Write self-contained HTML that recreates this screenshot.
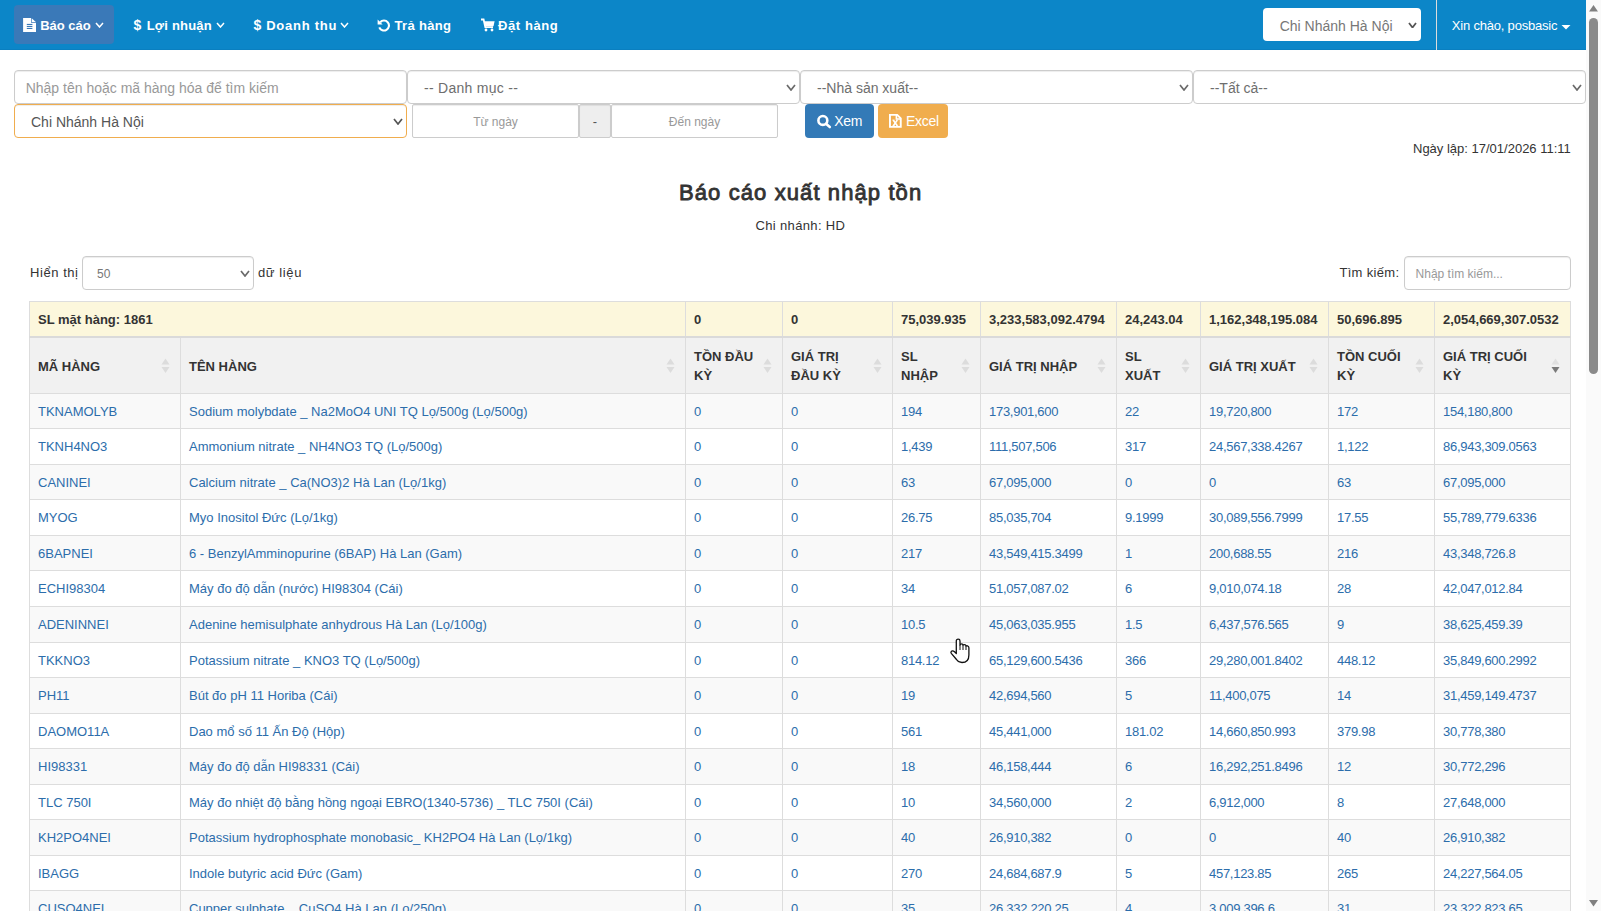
<!DOCTYPE html>
<html><head><meta charset="utf-8"><title>Báo cáo xuất nhập tồn</title>
<style>
html,body{margin:0;padding:0;overflow:hidden;width:1601px;height:911px;background:#fff;font-family:"Liberation Sans",sans-serif;font-size:13px;color:#333}
.a{position:absolute}
.t{white-space:nowrap}
</style></head><body>
<div class="a" style="left:0px;top:0px;width:1586px;height:50px;background:#0c86c8"></div>
<div class="a" style="left:0px;top:49px;width:1586px;height:1px;background:#0a7fc0"></div>
<div class="a" style="left:14px;top:5px;width:100px;height:39px;background:#3a79b8;border-radius:4px"></div>
<svg class="a" style="left:20px;top:15px" width="20" height="20" viewBox="0 0 20 20"><path d="M3.1 2.9H11V7.7H16V16.9H3.1Z" fill="#fff"/><path d="M11.7 3.2L15.8 7H11.7Z" fill="#fff"/><rect x="6.8" y="8.9" width="5.6" height="1.1" fill="#3a79b8"/><rect x="6.8" y="10.9" width="5.6" height="1.1" fill="#3a79b8"/><rect x="6.8" y="12.9" width="5.6" height="1.1" fill="#3a79b8"/></svg>
<div class="a t" style="left:40.20px;top:19.00px;font-size:13px;line-height:13px;font-weight:bold;color:#fff;">Báo cáo</div>
<svg class="a" style="left:95.3px;top:22.3px" width="9" height="6" viewBox="-1 -1 9 6"><path d="M0 0 L3.5 4 L7 0" fill="none" stroke="#fff" stroke-width="1.5"/></svg>
<div class="a t" style="left:133.50px;top:18.15px;font-size:14px;line-height:14px;font-weight:bold;color:#fff;">$</div>
<div class="a t" style="left:146.70px;top:19.00px;font-size:13px;line-height:13px;font-weight:bold;color:#fff;letter-spacing:0.2px;">Lợi nhuận</div>
<svg class="a" style="left:215.5px;top:22.3px" width="9" height="6" viewBox="-1 -1 9 6"><path d="M0 0 L3.5 4 L7 0" fill="none" stroke="#fff" stroke-width="1.5"/></svg>
<div class="a t" style="left:253.50px;top:18.15px;font-size:14px;line-height:14px;font-weight:bold;color:#fff;">$</div>
<div class="a t" style="left:266.20px;top:19.00px;font-size:13px;line-height:13px;font-weight:bold;color:#fff;letter-spacing:0.75px;">Doanh thu</div>
<svg class="a" style="left:340px;top:22.3px" width="9" height="6" viewBox="-1 -1 9 6"><path d="M0 0 L3.5 4 L7 0" fill="none" stroke="#fff" stroke-width="1.5"/></svg>
<svg class="a" style="left:377px;top:18px" width="14" height="14" viewBox="0 0 14 14"><path d="M3.2 4.2 A5 5 0 1 1 2.3 9.3" fill="none" stroke="#fff" stroke-width="2.1"/><path d="M0.6 1.6 L0.6 6.6 L5.6 6.6 Z" fill="#fff"/></svg>
<div class="a t" style="left:394.50px;top:19.00px;font-size:13px;line-height:13px;font-weight:bold;color:#fff;letter-spacing:0.33px;">Trả hàng</div>
<svg class="a" style="left:481px;top:18px" width="14" height="14" viewBox="0 0 14 14"><path d="M0 1.5H2.6L4.3 9.2H12" fill="none" stroke="#fff" stroke-width="1.8"/><path d="M3 3.2H13.6L12.5 8.2H4.2Z" fill="#fff"/><circle cx="5" cy="12" r="1.4" fill="#fff"/><circle cx="11" cy="12" r="1.4" fill="#fff"/></svg>
<div class="a t" style="left:498.00px;top:19.00px;font-size:13px;line-height:13px;font-weight:bold;color:#fff;letter-spacing:0.6px;">Đặt hàng</div>
<div class="a" style="left:1263px;top:8px;width:158px;height:33px;background:#fff;border-radius:4px;box-sizing:border-box"></div>
<div class="a t" style="left:1279.70px;top:19.15px;font-size:14px;line-height:14px;font-weight:normal;color:#777;">Chi Nhánh Hà Nội</div>
<svg class="a" style="left:1408px;top:21.5px" width="9" height="6.5" viewBox="-1 -1 9 6.5"><path d="M0 0 L3.5 4.5 L7 0" fill="none" stroke="#555" stroke-width="1.8"/></svg>
<div class="a" style="left:1436px;top:0px;width:1px;height:50px;background:#dcdcdc"></div>
<div class="a t" style="left:1451.80px;top:19.00px;font-size:13px;line-height:13px;font-weight:normal;color:#fff;letter-spacing:-0.2px;">Xin chào, posbasic</div>
<svg class="a" style="left:1561px;top:24.5px" width="10" height="5" viewBox="0 0 10 5"><path d="M0.5 0H9.5L5 4.5Z" fill="#fff"/></svg>
<div class="a" style="left:14px;top:70px;width:393px;height:34px;box-sizing:border-box;border:1px solid #ccc;background:#fff;border-radius:4px;box-shadow:inset 0 1px 1px rgba(0,0,0,.075)"></div>
<div class="a t" style="left:25.70px;top:81.15px;font-size:14px;line-height:14px;font-weight:normal;color:#999;">Nhập tên hoặc mã hàng hóa để tìm kiếm</div>
<div class="a" style="left:407px;top:70px;width:393px;height:34px;box-sizing:border-box;border:1px solid #ccc;background:#fff;border-radius:4px;box-shadow:inset 0 1px 1px rgba(0,0,0,.075)"></div>
<div class="a t" style="left:424.00px;top:81.15px;font-size:14px;line-height:14px;font-weight:normal;color:#6e6e6e;letter-spacing:0.28px;">-- Danh mục --</div>
<svg class="a" style="left:786px;top:84px" width="10" height="7" viewBox="-1 -1 10 7"><path d="M0 0 L4.0 5 L8 0" fill="none" stroke="#6a6a6a" stroke-width="1.7"/></svg>
<div class="a" style="left:800px;top:70px;width:393px;height:34px;box-sizing:border-box;border:1px solid #ccc;background:#fff;border-radius:4px;box-shadow:inset 0 1px 1px rgba(0,0,0,.075)"></div>
<div class="a t" style="left:817.00px;top:81.15px;font-size:14px;line-height:14px;font-weight:normal;color:#6e6e6e;">--Nhà sản xuất--</div>
<svg class="a" style="left:1179px;top:84px" width="10" height="7" viewBox="-1 -1 10 7"><path d="M0 0 L4.0 5 L8 0" fill="none" stroke="#6a6a6a" stroke-width="1.7"/></svg>
<div class="a" style="left:1193px;top:70px;width:393px;height:34px;box-sizing:border-box;border:1px solid #ccc;background:#fff;border-radius:4px;box-shadow:inset 0 1px 1px rgba(0,0,0,.075)"></div>
<div class="a t" style="left:1210.00px;top:81.15px;font-size:14px;line-height:14px;font-weight:normal;color:#6e6e6e;">--Tất cả--</div>
<svg class="a" style="left:1572px;top:84px" width="10" height="7" viewBox="-1 -1 10 7"><path d="M0 0 L4.0 5 L8 0" fill="none" stroke="#6a6a6a" stroke-width="1.7"/></svg>
<div class="a" style="left:14px;top:104px;width:393px;height:34px;box-sizing:border-box;border:1px solid #f0ad4e;background:#fff;border-radius:4px;box-shadow:inset 0 1px 1px rgba(0,0,0,.075)"></div>
<div class="a t" style="left:31.00px;top:115.15px;font-size:14px;line-height:14px;font-weight:normal;color:#555;">Chi Nhánh Hà Nội</div>
<svg class="a" style="left:393.2px;top:117.6px" width="10" height="7" viewBox="-1 -1 10 7"><path d="M0 0 L4.0 5 L8 0" fill="none" stroke="#555" stroke-width="1.7"/></svg>
<div class="a" style="left:412px;top:104px;width:167px;height:34px;box-sizing:border-box;border:1px solid #ccc;background:#fff;border-radius:2px;box-shadow:inset 0 1px 1px rgba(0,0,0,.075)"></div>
<div class="a t" style="left:412.00px;top:115.84px;font-size:12px;line-height:12px;font-weight:normal;color:#999;width:167px;text-align:center;">Từ ngày</div>
<div class="a" style="left:579px;top:104px;width:32px;height:34px;box-sizing:border-box;border:1px solid #ccc;background:#eee;border-radius:2px;box-shadow:inset 0 1px 1px rgba(0,0,0,.075)"></div>
<div class="a t" style="left:579.00px;top:115.00px;font-size:13px;line-height:13px;font-weight:normal;color:#555;width:32px;text-align:center;">-</div>
<div class="a" style="left:611px;top:104px;width:167px;height:34px;box-sizing:border-box;border:1px solid #ccc;background:#fff;border-radius:2px;box-shadow:inset 0 1px 1px rgba(0,0,0,.075)"></div>
<div class="a t" style="left:611.00px;top:115.84px;font-size:12px;line-height:12px;font-weight:normal;color:#999;width:167px;text-align:center;">Đến ngày</div>
<div class="a" style="left:805px;top:104px;width:69px;height:34px;background:#337ab7;border-radius:4px"></div>
<svg class="a" style="left:812px;top:110px" width="24" height="22" viewBox="0 0 24 22"><circle cx="10.85" cy="10.45" r="4.45" fill="none" stroke="#fff" stroke-width="2.6"/><path d="M14 13.8 L17.8 17" stroke="#fff" stroke-width="2.6" stroke-linecap="round"/></svg>
<div class="a t" style="left:834.20px;top:114.15px;font-size:14px;line-height:14px;font-weight:normal;color:#fff;letter-spacing:-0.25px;">Xem</div>
<div class="a" style="left:878px;top:104px;width:70px;height:34px;background:#f0ad4e;border-radius:4px"></div>
<svg class="a" style="left:884px;top:110px" width="24" height="22" viewBox="0 0 24 22"><path d="M5.95 4.9H13.2L16.75 8.45V16.9H5.95Z" fill="none" stroke="#fff" stroke-width="1.9" stroke-linejoin="miter"/><path d="M12.4 4.9V9H16.75" fill="none" stroke="#fff" stroke-width="1.6"/><path d="M8.4 10.1H10.6M12.3 10.1H14.2M8.4 15.8H10.6M12.3 15.8H14.2" stroke="#fff" stroke-width="0.9"/><path d="M9.3 10.2L13.3 15.7M13.2 10.2L9.3 15.7" stroke="#fff" stroke-width="1.5"/></svg>
<div class="a t" style="left:906.00px;top:114.15px;font-size:14px;line-height:14px;font-weight:normal;color:#fff;letter-spacing:-0.3px;">Excel</div>
<div class="a t" style="left:1413.00px;top:142.00px;font-size:13px;line-height:13px;font-weight:normal;color:#333;">Ngày lập: 17/01/2026 11:11</div>
<div class="a t" style="left:679.00px;top:181.98px;font-size:22px;line-height:22px;font-weight:normal;color:#333;letter-spacing:1.1px;-webkit-text-stroke:0.85px #333;">Báo cáo xuất nhập tồn</div>
<div class="a t" style="left:755.50px;top:218.50px;font-size:13px;line-height:13px;font-weight:normal;color:#333;letter-spacing:0.35px;">Chi nhánh: HD</div>
<div class="a t" style="left:30.00px;top:266.00px;font-size:13px;line-height:13px;font-weight:normal;color:#333;letter-spacing:0.56px;">Hiển thị</div>
<div class="a" style="left:82px;top:256px;width:172px;height:34px;box-sizing:border-box;border:1px solid #ccc;background:#fff;border-radius:4px;box-shadow:inset 0 1px 1px rgba(0,0,0,.075)"></div>
<div class="a t" style="left:97.00px;top:267.84px;font-size:12px;line-height:12px;font-weight:normal;color:#777;">50</div>
<svg class="a" style="left:240px;top:270px" width="10" height="7" viewBox="-1 -1 10 7"><path d="M0 0 L4.0 5 L8 0" fill="none" stroke="#6a6a6a" stroke-width="1.7"/></svg>
<div class="a t" style="left:258.00px;top:266.00px;font-size:13px;line-height:13px;font-weight:normal;color:#333;letter-spacing:0.6px;">dữ liệu</div>
<div class="a t" style="left:1339.40px;top:266.00px;font-size:13px;line-height:13px;font-weight:normal;color:#333;letter-spacing:0.33px;">Tìm kiếm:</div>
<div class="a" style="left:1404px;top:256px;width:167px;height:34px;box-sizing:border-box;border:1px solid #ccc;background:#fff;border-radius:4px;box-shadow:inset 0 1px 1px rgba(0,0,0,.075)"></div>
<div class="a t" style="left:1415.60px;top:267.84px;font-size:12px;line-height:12px;font-weight:normal;color:#999;">Nhập tìm kiếm...</div>
<div class="a" style="left:29px;top:301px;width:1542px;height:35px;background:#fcf7dc"></div>
<div class="a" style="left:29px;top:301px;width:1542px;height:1px;background:#ddd"></div>
<div class="a" style="left:29px;top:336px;width:1542px;height:2px;background:#dadada"></div>
<div class="a" style="left:29px;top:338px;width:1542px;height:55px;background:#f1f1f1"></div>
<div class="a t" style="left:38.00px;top:313.00px;font-size:13px;line-height:13px;font-weight:bold;color:#333;">SL mặt hàng: 1861</div>
<div class="a t" style="left:694.00px;top:313.00px;font-size:13px;line-height:13px;font-weight:bold;color:#333;">0</div>
<div class="a t" style="left:791.00px;top:313.00px;font-size:13px;line-height:13px;font-weight:bold;color:#333;">0</div>
<div class="a t" style="left:901.00px;top:313.00px;font-size:13px;line-height:13px;font-weight:bold;color:#333;">75,039.935</div>
<div class="a t" style="left:989.00px;top:313.00px;font-size:13px;line-height:13px;font-weight:bold;color:#333;">3,233,583,092.4794</div>
<div class="a t" style="left:1125.00px;top:313.00px;font-size:13px;line-height:13px;font-weight:bold;color:#333;">24,243.04</div>
<div class="a t" style="left:1209.00px;top:313.00px;font-size:13px;line-height:13px;font-weight:bold;color:#333;">1,162,348,195.084</div>
<div class="a t" style="left:1337.00px;top:313.00px;font-size:13px;line-height:13px;font-weight:bold;color:#333;">50,696.895</div>
<div class="a t" style="left:1443.00px;top:313.00px;font-size:13px;line-height:13px;font-weight:bold;color:#333;">2,054,669,307.0532</div>
<div class="a t" style="left:38.00px;top:360.00px;font-size:13px;line-height:13px;font-weight:bold;color:#333;">MÃ HÀNG</div>
<svg class="a" style="left:161px;top:358px" width="9" height="16" viewBox="0 0 9 16"><path d="M0.5 6.5H8.5L4.5 0.5Z" fill="#dcdcdc"/><path d="M0.5 9H8.5L4.5 15Z" fill="#dcdcdc"/></svg>
<div class="a t" style="left:189.00px;top:360.00px;font-size:13px;line-height:13px;font-weight:bold;color:#333;">TÊN HÀNG</div>
<svg class="a" style="left:666px;top:358px" width="9" height="16" viewBox="0 0 9 16"><path d="M0.5 6.5H8.5L4.5 0.5Z" fill="#dcdcdc"/><path d="M0.5 9H8.5L4.5 15Z" fill="#dcdcdc"/></svg>
<div class="a t" style="left:694.00px;top:350.00px;font-size:13px;line-height:13px;font-weight:bold;color:#333;">TỒN ĐẦU</div>
<div class="a t" style="left:694.00px;top:369.00px;font-size:13px;line-height:13px;font-weight:bold;color:#333;">KỲ</div>
<svg class="a" style="left:763px;top:358px" width="9" height="16" viewBox="0 0 9 16"><path d="M0.5 6.5H8.5L4.5 0.5Z" fill="#dcdcdc"/><path d="M0.5 9H8.5L4.5 15Z" fill="#dcdcdc"/></svg>
<div class="a t" style="left:791.00px;top:350.00px;font-size:13px;line-height:13px;font-weight:bold;color:#333;">GIÁ TRỊ</div>
<div class="a t" style="left:791.00px;top:369.00px;font-size:13px;line-height:13px;font-weight:bold;color:#333;">ĐẦU KỲ</div>
<svg class="a" style="left:873px;top:358px" width="9" height="16" viewBox="0 0 9 16"><path d="M0.5 6.5H8.5L4.5 0.5Z" fill="#dcdcdc"/><path d="M0.5 9H8.5L4.5 15Z" fill="#dcdcdc"/></svg>
<div class="a t" style="left:901.00px;top:350.00px;font-size:13px;line-height:13px;font-weight:bold;color:#333;">SL</div>
<div class="a t" style="left:901.00px;top:369.00px;font-size:13px;line-height:13px;font-weight:bold;color:#333;">NHẬP</div>
<svg class="a" style="left:961px;top:358px" width="9" height="16" viewBox="0 0 9 16"><path d="M0.5 6.5H8.5L4.5 0.5Z" fill="#dcdcdc"/><path d="M0.5 9H8.5L4.5 15Z" fill="#dcdcdc"/></svg>
<div class="a t" style="left:989.00px;top:360.00px;font-size:13px;line-height:13px;font-weight:bold;color:#333;">GIÁ TRỊ NHẬP</div>
<svg class="a" style="left:1097px;top:358px" width="9" height="16" viewBox="0 0 9 16"><path d="M0.5 6.5H8.5L4.5 0.5Z" fill="#dcdcdc"/><path d="M0.5 9H8.5L4.5 15Z" fill="#dcdcdc"/></svg>
<div class="a t" style="left:1125.00px;top:350.00px;font-size:13px;line-height:13px;font-weight:bold;color:#333;">SL</div>
<div class="a t" style="left:1125.00px;top:369.00px;font-size:13px;line-height:13px;font-weight:bold;color:#333;">XUẤT</div>
<svg class="a" style="left:1181px;top:358px" width="9" height="16" viewBox="0 0 9 16"><path d="M0.5 6.5H8.5L4.5 0.5Z" fill="#dcdcdc"/><path d="M0.5 9H8.5L4.5 15Z" fill="#dcdcdc"/></svg>
<div class="a t" style="left:1209.00px;top:360.00px;font-size:13px;line-height:13px;font-weight:bold;color:#333;">GIÁ TRỊ XUẤT</div>
<svg class="a" style="left:1309px;top:358px" width="9" height="16" viewBox="0 0 9 16"><path d="M0.5 6.5H8.5L4.5 0.5Z" fill="#dcdcdc"/><path d="M0.5 9H8.5L4.5 15Z" fill="#dcdcdc"/></svg>
<div class="a t" style="left:1337.00px;top:350.00px;font-size:13px;line-height:13px;font-weight:bold;color:#333;">TỒN CUỐI</div>
<div class="a t" style="left:1337.00px;top:369.00px;font-size:13px;line-height:13px;font-weight:bold;color:#333;">KỲ</div>
<svg class="a" style="left:1415px;top:358px" width="9" height="16" viewBox="0 0 9 16"><path d="M0.5 6.5H8.5L4.5 0.5Z" fill="#dcdcdc"/><path d="M0.5 9H8.5L4.5 15Z" fill="#dcdcdc"/></svg>
<div class="a t" style="left:1443.00px;top:350.00px;font-size:13px;line-height:13px;font-weight:bold;color:#333;">GIÁ TRỊ CUỐI</div>
<div class="a t" style="left:1443.00px;top:369.00px;font-size:13px;line-height:13px;font-weight:bold;color:#333;">KỲ</div>
<svg class="a" style="left:1551px;top:358px" width="9" height="16" viewBox="0 0 9 16"><path d="M0.5 6.5H8.5L4.5 0.5Z" fill="#e0e0e0"/><path d="M0.5 9H8.5L4.5 15Z" fill="#7a7a7a"/></svg>
<div class="a" style="left:29px;top:393px;width:1542px;height:35px;background:#f9f9f9"></div>
<div class="a" style="left:29px;top:393px;width:1542px;height:1px;background:#ddd"></div>
<div class="a t" style="left:38.00px;top:405.00px;font-size:13px;line-height:13px;font-weight:normal;color:#2c6dab;">TKNAMOLYB</div>
<div class="a t" style="left:189.00px;top:405.00px;font-size:13px;line-height:13px;font-weight:normal;color:#2c6dab;">Sodium molybdate _ Na2MoO4 UNI TQ Lọ/500g (Lọ/500g)</div>
<div class="a t" style="left:694.00px;top:405.00px;font-size:13px;line-height:13px;font-weight:normal;color:#2c6dab;letter-spacing:-0.28px;">0</div>
<div class="a t" style="left:791.00px;top:405.00px;font-size:13px;line-height:13px;font-weight:normal;color:#2c6dab;letter-spacing:-0.28px;">0</div>
<div class="a t" style="left:901.00px;top:405.00px;font-size:13px;line-height:13px;font-weight:normal;color:#2c6dab;letter-spacing:-0.28px;">194</div>
<div class="a t" style="left:989.00px;top:405.00px;font-size:13px;line-height:13px;font-weight:normal;color:#2c6dab;letter-spacing:-0.28px;">173,901,600</div>
<div class="a t" style="left:1125.00px;top:405.00px;font-size:13px;line-height:13px;font-weight:normal;color:#2c6dab;letter-spacing:-0.28px;">22</div>
<div class="a t" style="left:1209.00px;top:405.00px;font-size:13px;line-height:13px;font-weight:normal;color:#2c6dab;letter-spacing:-0.28px;">19,720,800</div>
<div class="a t" style="left:1337.00px;top:405.00px;font-size:13px;line-height:13px;font-weight:normal;color:#2c6dab;letter-spacing:-0.28px;">172</div>
<div class="a t" style="left:1443.00px;top:405.00px;font-size:13px;line-height:13px;font-weight:normal;color:#2c6dab;letter-spacing:-0.28px;">154,180,800</div>
<div class="a" style="left:29px;top:428px;width:1542px;height:36px;background:#fff"></div>
<div class="a" style="left:29px;top:428px;width:1542px;height:1px;background:#ddd"></div>
<div class="a t" style="left:38.00px;top:440.00px;font-size:13px;line-height:13px;font-weight:normal;color:#2c6dab;">TKNH4NO3</div>
<div class="a t" style="left:189.00px;top:440.00px;font-size:13px;line-height:13px;font-weight:normal;color:#2c6dab;">Ammonium nitrate _ NH4NO3 TQ (Lọ/500g)</div>
<div class="a t" style="left:694.00px;top:440.00px;font-size:13px;line-height:13px;font-weight:normal;color:#2c6dab;letter-spacing:-0.28px;">0</div>
<div class="a t" style="left:791.00px;top:440.00px;font-size:13px;line-height:13px;font-weight:normal;color:#2c6dab;letter-spacing:-0.28px;">0</div>
<div class="a t" style="left:901.00px;top:440.00px;font-size:13px;line-height:13px;font-weight:normal;color:#2c6dab;letter-spacing:-0.28px;">1,439</div>
<div class="a t" style="left:989.00px;top:440.00px;font-size:13px;line-height:13px;font-weight:normal;color:#2c6dab;letter-spacing:-0.28px;">111,507,506</div>
<div class="a t" style="left:1125.00px;top:440.00px;font-size:13px;line-height:13px;font-weight:normal;color:#2c6dab;letter-spacing:-0.28px;">317</div>
<div class="a t" style="left:1209.00px;top:440.00px;font-size:13px;line-height:13px;font-weight:normal;color:#2c6dab;letter-spacing:-0.28px;">24,567,338.4267</div>
<div class="a t" style="left:1337.00px;top:440.00px;font-size:13px;line-height:13px;font-weight:normal;color:#2c6dab;letter-spacing:-0.28px;">1,122</div>
<div class="a t" style="left:1443.00px;top:440.00px;font-size:13px;line-height:13px;font-weight:normal;color:#2c6dab;letter-spacing:-0.28px;">86,943,309.0563</div>
<div class="a" style="left:29px;top:464px;width:1542px;height:35px;background:#f9f9f9"></div>
<div class="a" style="left:29px;top:464px;width:1542px;height:1px;background:#ddd"></div>
<div class="a t" style="left:38.00px;top:476.00px;font-size:13px;line-height:13px;font-weight:normal;color:#2c6dab;">CANINEI</div>
<div class="a t" style="left:189.00px;top:476.00px;font-size:13px;line-height:13px;font-weight:normal;color:#2c6dab;">Calcium nitrate _ Ca(NO3)2 Hà Lan (Lọ/1kg)</div>
<div class="a t" style="left:694.00px;top:476.00px;font-size:13px;line-height:13px;font-weight:normal;color:#2c6dab;letter-spacing:-0.28px;">0</div>
<div class="a t" style="left:791.00px;top:476.00px;font-size:13px;line-height:13px;font-weight:normal;color:#2c6dab;letter-spacing:-0.28px;">0</div>
<div class="a t" style="left:901.00px;top:476.00px;font-size:13px;line-height:13px;font-weight:normal;color:#2c6dab;letter-spacing:-0.28px;">63</div>
<div class="a t" style="left:989.00px;top:476.00px;font-size:13px;line-height:13px;font-weight:normal;color:#2c6dab;letter-spacing:-0.28px;">67,095,000</div>
<div class="a t" style="left:1125.00px;top:476.00px;font-size:13px;line-height:13px;font-weight:normal;color:#2c6dab;letter-spacing:-0.28px;">0</div>
<div class="a t" style="left:1209.00px;top:476.00px;font-size:13px;line-height:13px;font-weight:normal;color:#2c6dab;letter-spacing:-0.28px;">0</div>
<div class="a t" style="left:1337.00px;top:476.00px;font-size:13px;line-height:13px;font-weight:normal;color:#2c6dab;letter-spacing:-0.28px;">63</div>
<div class="a t" style="left:1443.00px;top:476.00px;font-size:13px;line-height:13px;font-weight:normal;color:#2c6dab;letter-spacing:-0.28px;">67,095,000</div>
<div class="a" style="left:29px;top:499px;width:1542px;height:36px;background:#fff"></div>
<div class="a" style="left:29px;top:499px;width:1542px;height:1px;background:#ddd"></div>
<div class="a t" style="left:38.00px;top:511.00px;font-size:13px;line-height:13px;font-weight:normal;color:#2c6dab;">MYOG</div>
<div class="a t" style="left:189.00px;top:511.00px;font-size:13px;line-height:13px;font-weight:normal;color:#2c6dab;">Myo Inositol Đức (Lọ/1kg)</div>
<div class="a t" style="left:694.00px;top:511.00px;font-size:13px;line-height:13px;font-weight:normal;color:#2c6dab;letter-spacing:-0.28px;">0</div>
<div class="a t" style="left:791.00px;top:511.00px;font-size:13px;line-height:13px;font-weight:normal;color:#2c6dab;letter-spacing:-0.28px;">0</div>
<div class="a t" style="left:901.00px;top:511.00px;font-size:13px;line-height:13px;font-weight:normal;color:#2c6dab;letter-spacing:-0.28px;">26.75</div>
<div class="a t" style="left:989.00px;top:511.00px;font-size:13px;line-height:13px;font-weight:normal;color:#2c6dab;letter-spacing:-0.28px;">85,035,704</div>
<div class="a t" style="left:1125.00px;top:511.00px;font-size:13px;line-height:13px;font-weight:normal;color:#2c6dab;letter-spacing:-0.28px;">9.1999</div>
<div class="a t" style="left:1209.00px;top:511.00px;font-size:13px;line-height:13px;font-weight:normal;color:#2c6dab;letter-spacing:-0.28px;">30,089,556.7999</div>
<div class="a t" style="left:1337.00px;top:511.00px;font-size:13px;line-height:13px;font-weight:normal;color:#2c6dab;letter-spacing:-0.28px;">17.55</div>
<div class="a t" style="left:1443.00px;top:511.00px;font-size:13px;line-height:13px;font-weight:normal;color:#2c6dab;letter-spacing:-0.28px;">55,789,779.6336</div>
<div class="a" style="left:29px;top:535px;width:1542px;height:35px;background:#f9f9f9"></div>
<div class="a" style="left:29px;top:535px;width:1542px;height:1px;background:#ddd"></div>
<div class="a t" style="left:38.00px;top:547.00px;font-size:13px;line-height:13px;font-weight:normal;color:#2c6dab;">6BAPNEI</div>
<div class="a t" style="left:189.00px;top:547.00px;font-size:13px;line-height:13px;font-weight:normal;color:#2c6dab;">6 - BenzylAmminopurine (6BAP) Hà Lan (Gam)</div>
<div class="a t" style="left:694.00px;top:547.00px;font-size:13px;line-height:13px;font-weight:normal;color:#2c6dab;letter-spacing:-0.28px;">0</div>
<div class="a t" style="left:791.00px;top:547.00px;font-size:13px;line-height:13px;font-weight:normal;color:#2c6dab;letter-spacing:-0.28px;">0</div>
<div class="a t" style="left:901.00px;top:547.00px;font-size:13px;line-height:13px;font-weight:normal;color:#2c6dab;letter-spacing:-0.28px;">217</div>
<div class="a t" style="left:989.00px;top:547.00px;font-size:13px;line-height:13px;font-weight:normal;color:#2c6dab;letter-spacing:-0.28px;">43,549,415.3499</div>
<div class="a t" style="left:1125.00px;top:547.00px;font-size:13px;line-height:13px;font-weight:normal;color:#2c6dab;letter-spacing:-0.28px;">1</div>
<div class="a t" style="left:1209.00px;top:547.00px;font-size:13px;line-height:13px;font-weight:normal;color:#2c6dab;letter-spacing:-0.28px;">200,688.55</div>
<div class="a t" style="left:1337.00px;top:547.00px;font-size:13px;line-height:13px;font-weight:normal;color:#2c6dab;letter-spacing:-0.28px;">216</div>
<div class="a t" style="left:1443.00px;top:547.00px;font-size:13px;line-height:13px;font-weight:normal;color:#2c6dab;letter-spacing:-0.28px;">43,348,726.8</div>
<div class="a" style="left:29px;top:570px;width:1542px;height:36px;background:#fff"></div>
<div class="a" style="left:29px;top:570px;width:1542px;height:1px;background:#ddd"></div>
<div class="a t" style="left:38.00px;top:582.00px;font-size:13px;line-height:13px;font-weight:normal;color:#2c6dab;">ECHI98304</div>
<div class="a t" style="left:189.00px;top:582.00px;font-size:13px;line-height:13px;font-weight:normal;color:#2c6dab;">Máy đo độ dẫn (nước) HI98304 (Cái)</div>
<div class="a t" style="left:694.00px;top:582.00px;font-size:13px;line-height:13px;font-weight:normal;color:#2c6dab;letter-spacing:-0.28px;">0</div>
<div class="a t" style="left:791.00px;top:582.00px;font-size:13px;line-height:13px;font-weight:normal;color:#2c6dab;letter-spacing:-0.28px;">0</div>
<div class="a t" style="left:901.00px;top:582.00px;font-size:13px;line-height:13px;font-weight:normal;color:#2c6dab;letter-spacing:-0.28px;">34</div>
<div class="a t" style="left:989.00px;top:582.00px;font-size:13px;line-height:13px;font-weight:normal;color:#2c6dab;letter-spacing:-0.28px;">51,057,087.02</div>
<div class="a t" style="left:1125.00px;top:582.00px;font-size:13px;line-height:13px;font-weight:normal;color:#2c6dab;letter-spacing:-0.28px;">6</div>
<div class="a t" style="left:1209.00px;top:582.00px;font-size:13px;line-height:13px;font-weight:normal;color:#2c6dab;letter-spacing:-0.28px;">9,010,074.18</div>
<div class="a t" style="left:1337.00px;top:582.00px;font-size:13px;line-height:13px;font-weight:normal;color:#2c6dab;letter-spacing:-0.28px;">28</div>
<div class="a t" style="left:1443.00px;top:582.00px;font-size:13px;line-height:13px;font-weight:normal;color:#2c6dab;letter-spacing:-0.28px;">42,047,012.84</div>
<div class="a" style="left:29px;top:606px;width:1542px;height:36px;background:#f9f9f9"></div>
<div class="a" style="left:29px;top:606px;width:1542px;height:1px;background:#ddd"></div>
<div class="a t" style="left:38.00px;top:618.00px;font-size:13px;line-height:13px;font-weight:normal;color:#2c6dab;">ADENINNEI</div>
<div class="a t" style="left:189.00px;top:618.00px;font-size:13px;line-height:13px;font-weight:normal;color:#2c6dab;">Adenine hemisulphate anhydrous Hà Lan (Lọ/100g)</div>
<div class="a t" style="left:694.00px;top:618.00px;font-size:13px;line-height:13px;font-weight:normal;color:#2c6dab;letter-spacing:-0.28px;">0</div>
<div class="a t" style="left:791.00px;top:618.00px;font-size:13px;line-height:13px;font-weight:normal;color:#2c6dab;letter-spacing:-0.28px;">0</div>
<div class="a t" style="left:901.00px;top:618.00px;font-size:13px;line-height:13px;font-weight:normal;color:#2c6dab;letter-spacing:-0.28px;">10.5</div>
<div class="a t" style="left:989.00px;top:618.00px;font-size:13px;line-height:13px;font-weight:normal;color:#2c6dab;letter-spacing:-0.28px;">45,063,035.955</div>
<div class="a t" style="left:1125.00px;top:618.00px;font-size:13px;line-height:13px;font-weight:normal;color:#2c6dab;letter-spacing:-0.28px;">1.5</div>
<div class="a t" style="left:1209.00px;top:618.00px;font-size:13px;line-height:13px;font-weight:normal;color:#2c6dab;letter-spacing:-0.28px;">6,437,576.565</div>
<div class="a t" style="left:1337.00px;top:618.00px;font-size:13px;line-height:13px;font-weight:normal;color:#2c6dab;letter-spacing:-0.28px;">9</div>
<div class="a t" style="left:1443.00px;top:618.00px;font-size:13px;line-height:13px;font-weight:normal;color:#2c6dab;letter-spacing:-0.28px;">38,625,459.39</div>
<div class="a" style="left:29px;top:642px;width:1542px;height:35px;background:#fff"></div>
<div class="a" style="left:29px;top:642px;width:1542px;height:1px;background:#ddd"></div>
<div class="a t" style="left:38.00px;top:654.00px;font-size:13px;line-height:13px;font-weight:normal;color:#2c6dab;">TKKNO3</div>
<div class="a t" style="left:189.00px;top:654.00px;font-size:13px;line-height:13px;font-weight:normal;color:#2c6dab;">Potassium nitrate _ KNO3 TQ (Lọ/500g)</div>
<div class="a t" style="left:694.00px;top:654.00px;font-size:13px;line-height:13px;font-weight:normal;color:#2c6dab;letter-spacing:-0.28px;">0</div>
<div class="a t" style="left:791.00px;top:654.00px;font-size:13px;line-height:13px;font-weight:normal;color:#2c6dab;letter-spacing:-0.28px;">0</div>
<div class="a t" style="left:901.00px;top:654.00px;font-size:13px;line-height:13px;font-weight:normal;color:#2c6dab;letter-spacing:-0.28px;">814.12</div>
<div class="a t" style="left:989.00px;top:654.00px;font-size:13px;line-height:13px;font-weight:normal;color:#2c6dab;letter-spacing:-0.28px;">65,129,600.5436</div>
<div class="a t" style="left:1125.00px;top:654.00px;font-size:13px;line-height:13px;font-weight:normal;color:#2c6dab;letter-spacing:-0.28px;">366</div>
<div class="a t" style="left:1209.00px;top:654.00px;font-size:13px;line-height:13px;font-weight:normal;color:#2c6dab;letter-spacing:-0.28px;">29,280,001.8402</div>
<div class="a t" style="left:1337.00px;top:654.00px;font-size:13px;line-height:13px;font-weight:normal;color:#2c6dab;letter-spacing:-0.28px;">448.12</div>
<div class="a t" style="left:1443.00px;top:654.00px;font-size:13px;line-height:13px;font-weight:normal;color:#2c6dab;letter-spacing:-0.28px;">35,849,600.2992</div>
<div class="a" style="left:29px;top:677px;width:1542px;height:36px;background:#f9f9f9"></div>
<div class="a" style="left:29px;top:677px;width:1542px;height:1px;background:#ddd"></div>
<div class="a t" style="left:38.00px;top:689.00px;font-size:13px;line-height:13px;font-weight:normal;color:#2c6dab;">PH11</div>
<div class="a t" style="left:189.00px;top:689.00px;font-size:13px;line-height:13px;font-weight:normal;color:#2c6dab;">Bút đo pH 11 Horiba (Cái)</div>
<div class="a t" style="left:694.00px;top:689.00px;font-size:13px;line-height:13px;font-weight:normal;color:#2c6dab;letter-spacing:-0.28px;">0</div>
<div class="a t" style="left:791.00px;top:689.00px;font-size:13px;line-height:13px;font-weight:normal;color:#2c6dab;letter-spacing:-0.28px;">0</div>
<div class="a t" style="left:901.00px;top:689.00px;font-size:13px;line-height:13px;font-weight:normal;color:#2c6dab;letter-spacing:-0.28px;">19</div>
<div class="a t" style="left:989.00px;top:689.00px;font-size:13px;line-height:13px;font-weight:normal;color:#2c6dab;letter-spacing:-0.28px;">42,694,560</div>
<div class="a t" style="left:1125.00px;top:689.00px;font-size:13px;line-height:13px;font-weight:normal;color:#2c6dab;letter-spacing:-0.28px;">5</div>
<div class="a t" style="left:1209.00px;top:689.00px;font-size:13px;line-height:13px;font-weight:normal;color:#2c6dab;letter-spacing:-0.28px;">11,400,075</div>
<div class="a t" style="left:1337.00px;top:689.00px;font-size:13px;line-height:13px;font-weight:normal;color:#2c6dab;letter-spacing:-0.28px;">14</div>
<div class="a t" style="left:1443.00px;top:689.00px;font-size:13px;line-height:13px;font-weight:normal;color:#2c6dab;letter-spacing:-0.28px;">31,459,149.4737</div>
<div class="a" style="left:29px;top:713px;width:1542px;height:35px;background:#fff"></div>
<div class="a" style="left:29px;top:713px;width:1542px;height:1px;background:#ddd"></div>
<div class="a t" style="left:38.00px;top:725.00px;font-size:13px;line-height:13px;font-weight:normal;color:#2c6dab;">DAOMO11A</div>
<div class="a t" style="left:189.00px;top:725.00px;font-size:13px;line-height:13px;font-weight:normal;color:#2c6dab;">Dao mổ số 11 Ấn Độ (Hộp)</div>
<div class="a t" style="left:694.00px;top:725.00px;font-size:13px;line-height:13px;font-weight:normal;color:#2c6dab;letter-spacing:-0.28px;">0</div>
<div class="a t" style="left:791.00px;top:725.00px;font-size:13px;line-height:13px;font-weight:normal;color:#2c6dab;letter-spacing:-0.28px;">0</div>
<div class="a t" style="left:901.00px;top:725.00px;font-size:13px;line-height:13px;font-weight:normal;color:#2c6dab;letter-spacing:-0.28px;">561</div>
<div class="a t" style="left:989.00px;top:725.00px;font-size:13px;line-height:13px;font-weight:normal;color:#2c6dab;letter-spacing:-0.28px;">45,441,000</div>
<div class="a t" style="left:1125.00px;top:725.00px;font-size:13px;line-height:13px;font-weight:normal;color:#2c6dab;letter-spacing:-0.28px;">181.02</div>
<div class="a t" style="left:1209.00px;top:725.00px;font-size:13px;line-height:13px;font-weight:normal;color:#2c6dab;letter-spacing:-0.28px;">14,660,850.993</div>
<div class="a t" style="left:1337.00px;top:725.00px;font-size:13px;line-height:13px;font-weight:normal;color:#2c6dab;letter-spacing:-0.28px;">379.98</div>
<div class="a t" style="left:1443.00px;top:725.00px;font-size:13px;line-height:13px;font-weight:normal;color:#2c6dab;letter-spacing:-0.28px;">30,778,380</div>
<div class="a" style="left:29px;top:748px;width:1542px;height:36px;background:#f9f9f9"></div>
<div class="a" style="left:29px;top:748px;width:1542px;height:1px;background:#ddd"></div>
<div class="a t" style="left:38.00px;top:760.00px;font-size:13px;line-height:13px;font-weight:normal;color:#2c6dab;">HI98331</div>
<div class="a t" style="left:189.00px;top:760.00px;font-size:13px;line-height:13px;font-weight:normal;color:#2c6dab;">Máy đo độ dẫn HI98331 (Cái)</div>
<div class="a t" style="left:694.00px;top:760.00px;font-size:13px;line-height:13px;font-weight:normal;color:#2c6dab;letter-spacing:-0.28px;">0</div>
<div class="a t" style="left:791.00px;top:760.00px;font-size:13px;line-height:13px;font-weight:normal;color:#2c6dab;letter-spacing:-0.28px;">0</div>
<div class="a t" style="left:901.00px;top:760.00px;font-size:13px;line-height:13px;font-weight:normal;color:#2c6dab;letter-spacing:-0.28px;">18</div>
<div class="a t" style="left:989.00px;top:760.00px;font-size:13px;line-height:13px;font-weight:normal;color:#2c6dab;letter-spacing:-0.28px;">46,158,444</div>
<div class="a t" style="left:1125.00px;top:760.00px;font-size:13px;line-height:13px;font-weight:normal;color:#2c6dab;letter-spacing:-0.28px;">6</div>
<div class="a t" style="left:1209.00px;top:760.00px;font-size:13px;line-height:13px;font-weight:normal;color:#2c6dab;letter-spacing:-0.28px;">16,292,251.8496</div>
<div class="a t" style="left:1337.00px;top:760.00px;font-size:13px;line-height:13px;font-weight:normal;color:#2c6dab;letter-spacing:-0.28px;">12</div>
<div class="a t" style="left:1443.00px;top:760.00px;font-size:13px;line-height:13px;font-weight:normal;color:#2c6dab;letter-spacing:-0.28px;">30,772,296</div>
<div class="a" style="left:29px;top:784px;width:1542px;height:35px;background:#fff"></div>
<div class="a" style="left:29px;top:784px;width:1542px;height:1px;background:#ddd"></div>
<div class="a t" style="left:38.00px;top:796.00px;font-size:13px;line-height:13px;font-weight:normal;color:#2c6dab;">TLC 750I</div>
<div class="a t" style="left:189.00px;top:796.00px;font-size:13px;line-height:13px;font-weight:normal;color:#2c6dab;">Máy đo nhiệt độ bằng hồng ngoại EBRO(1340-5736) _ TLC 750I (Cái)</div>
<div class="a t" style="left:694.00px;top:796.00px;font-size:13px;line-height:13px;font-weight:normal;color:#2c6dab;letter-spacing:-0.28px;">0</div>
<div class="a t" style="left:791.00px;top:796.00px;font-size:13px;line-height:13px;font-weight:normal;color:#2c6dab;letter-spacing:-0.28px;">0</div>
<div class="a t" style="left:901.00px;top:796.00px;font-size:13px;line-height:13px;font-weight:normal;color:#2c6dab;letter-spacing:-0.28px;">10</div>
<div class="a t" style="left:989.00px;top:796.00px;font-size:13px;line-height:13px;font-weight:normal;color:#2c6dab;letter-spacing:-0.28px;">34,560,000</div>
<div class="a t" style="left:1125.00px;top:796.00px;font-size:13px;line-height:13px;font-weight:normal;color:#2c6dab;letter-spacing:-0.28px;">2</div>
<div class="a t" style="left:1209.00px;top:796.00px;font-size:13px;line-height:13px;font-weight:normal;color:#2c6dab;letter-spacing:-0.28px;">6,912,000</div>
<div class="a t" style="left:1337.00px;top:796.00px;font-size:13px;line-height:13px;font-weight:normal;color:#2c6dab;letter-spacing:-0.28px;">8</div>
<div class="a t" style="left:1443.00px;top:796.00px;font-size:13px;line-height:13px;font-weight:normal;color:#2c6dab;letter-spacing:-0.28px;">27,648,000</div>
<div class="a" style="left:29px;top:819px;width:1542px;height:36px;background:#f9f9f9"></div>
<div class="a" style="left:29px;top:819px;width:1542px;height:1px;background:#ddd"></div>
<div class="a t" style="left:38.00px;top:831.00px;font-size:13px;line-height:13px;font-weight:normal;color:#2c6dab;">KH2PO4NEI</div>
<div class="a t" style="left:189.00px;top:831.00px;font-size:13px;line-height:13px;font-weight:normal;color:#2c6dab;">Potassium hydrophosphate monobasic_ KH2PO4 Hà Lan (Lọ/1kg)</div>
<div class="a t" style="left:694.00px;top:831.00px;font-size:13px;line-height:13px;font-weight:normal;color:#2c6dab;letter-spacing:-0.28px;">0</div>
<div class="a t" style="left:791.00px;top:831.00px;font-size:13px;line-height:13px;font-weight:normal;color:#2c6dab;letter-spacing:-0.28px;">0</div>
<div class="a t" style="left:901.00px;top:831.00px;font-size:13px;line-height:13px;font-weight:normal;color:#2c6dab;letter-spacing:-0.28px;">40</div>
<div class="a t" style="left:989.00px;top:831.00px;font-size:13px;line-height:13px;font-weight:normal;color:#2c6dab;letter-spacing:-0.28px;">26,910,382</div>
<div class="a t" style="left:1125.00px;top:831.00px;font-size:13px;line-height:13px;font-weight:normal;color:#2c6dab;letter-spacing:-0.28px;">0</div>
<div class="a t" style="left:1209.00px;top:831.00px;font-size:13px;line-height:13px;font-weight:normal;color:#2c6dab;letter-spacing:-0.28px;">0</div>
<div class="a t" style="left:1337.00px;top:831.00px;font-size:13px;line-height:13px;font-weight:normal;color:#2c6dab;letter-spacing:-0.28px;">40</div>
<div class="a t" style="left:1443.00px;top:831.00px;font-size:13px;line-height:13px;font-weight:normal;color:#2c6dab;letter-spacing:-0.28px;">26,910,382</div>
<div class="a" style="left:29px;top:855px;width:1542px;height:35px;background:#fff"></div>
<div class="a" style="left:29px;top:855px;width:1542px;height:1px;background:#ddd"></div>
<div class="a t" style="left:38.00px;top:867.00px;font-size:13px;line-height:13px;font-weight:normal;color:#2c6dab;">IBAGG</div>
<div class="a t" style="left:189.00px;top:867.00px;font-size:13px;line-height:13px;font-weight:normal;color:#2c6dab;">Indole butyric acid Đức (Gam)</div>
<div class="a t" style="left:694.00px;top:867.00px;font-size:13px;line-height:13px;font-weight:normal;color:#2c6dab;letter-spacing:-0.28px;">0</div>
<div class="a t" style="left:791.00px;top:867.00px;font-size:13px;line-height:13px;font-weight:normal;color:#2c6dab;letter-spacing:-0.28px;">0</div>
<div class="a t" style="left:901.00px;top:867.00px;font-size:13px;line-height:13px;font-weight:normal;color:#2c6dab;letter-spacing:-0.28px;">270</div>
<div class="a t" style="left:989.00px;top:867.00px;font-size:13px;line-height:13px;font-weight:normal;color:#2c6dab;letter-spacing:-0.28px;">24,684,687.9</div>
<div class="a t" style="left:1125.00px;top:867.00px;font-size:13px;line-height:13px;font-weight:normal;color:#2c6dab;letter-spacing:-0.28px;">5</div>
<div class="a t" style="left:1209.00px;top:867.00px;font-size:13px;line-height:13px;font-weight:normal;color:#2c6dab;letter-spacing:-0.28px;">457,123.85</div>
<div class="a t" style="left:1337.00px;top:867.00px;font-size:13px;line-height:13px;font-weight:normal;color:#2c6dab;letter-spacing:-0.28px;">265</div>
<div class="a t" style="left:1443.00px;top:867.00px;font-size:13px;line-height:13px;font-weight:normal;color:#2c6dab;letter-spacing:-0.28px;">24,227,564.05</div>
<div class="a" style="left:29px;top:890px;width:1542px;height:36px;background:#f9f9f9"></div>
<div class="a" style="left:29px;top:890px;width:1542px;height:1px;background:#ddd"></div>
<div class="a t" style="left:38.00px;top:902.00px;font-size:13px;line-height:13px;font-weight:normal;color:#2c6dab;">CUSO4NEI</div>
<div class="a t" style="left:189.00px;top:902.00px;font-size:13px;line-height:13px;font-weight:normal;color:#2c6dab;">Cupper sulphate _ CuSO4 Hà Lan (Lọ/250g)</div>
<div class="a t" style="left:694.00px;top:902.00px;font-size:13px;line-height:13px;font-weight:normal;color:#2c6dab;letter-spacing:-0.28px;">0</div>
<div class="a t" style="left:791.00px;top:902.00px;font-size:13px;line-height:13px;font-weight:normal;color:#2c6dab;letter-spacing:-0.28px;">0</div>
<div class="a t" style="left:901.00px;top:902.00px;font-size:13px;line-height:13px;font-weight:normal;color:#2c6dab;letter-spacing:-0.28px;">35</div>
<div class="a t" style="left:989.00px;top:902.00px;font-size:13px;line-height:13px;font-weight:normal;color:#2c6dab;letter-spacing:-0.28px;">26,332,220.25</div>
<div class="a t" style="left:1125.00px;top:902.00px;font-size:13px;line-height:13px;font-weight:normal;color:#2c6dab;letter-spacing:-0.28px;">4</div>
<div class="a t" style="left:1209.00px;top:902.00px;font-size:13px;line-height:13px;font-weight:normal;color:#2c6dab;letter-spacing:-0.28px;">3,009,396.6</div>
<div class="a t" style="left:1337.00px;top:902.00px;font-size:13px;line-height:13px;font-weight:normal;color:#2c6dab;letter-spacing:-0.28px;">31</div>
<div class="a t" style="left:1443.00px;top:902.00px;font-size:13px;line-height:13px;font-weight:normal;color:#2c6dab;letter-spacing:-0.28px;">23,322,823.65</div>
<div class="a" style="left:29px;top:338px;width:1px;height:573px;background:#ddd"></div>
<div class="a" style="left:180px;top:338px;width:1px;height:573px;background:#ddd"></div>
<div class="a" style="left:685px;top:338px;width:1px;height:573px;background:#ddd"></div>
<div class="a" style="left:782px;top:338px;width:1px;height:573px;background:#ddd"></div>
<div class="a" style="left:892px;top:338px;width:1px;height:573px;background:#ddd"></div>
<div class="a" style="left:980px;top:338px;width:1px;height:573px;background:#ddd"></div>
<div class="a" style="left:1116px;top:338px;width:1px;height:573px;background:#ddd"></div>
<div class="a" style="left:1200px;top:338px;width:1px;height:573px;background:#ddd"></div>
<div class="a" style="left:1328px;top:338px;width:1px;height:573px;background:#ddd"></div>
<div class="a" style="left:1434px;top:338px;width:1px;height:573px;background:#ddd"></div>
<div class="a" style="left:1570px;top:338px;width:1px;height:573px;background:#ddd"></div>
<div class="a" style="left:29px;top:301px;width:1px;height:35px;background:#dddddd"></div>
<div class="a" style="left:685px;top:301px;width:1px;height:35px;background:#dddddd"></div>
<div class="a" style="left:782px;top:301px;width:1px;height:35px;background:#dddddd"></div>
<div class="a" style="left:892px;top:301px;width:1px;height:35px;background:#dddddd"></div>
<div class="a" style="left:980px;top:301px;width:1px;height:35px;background:#dddddd"></div>
<div class="a" style="left:1116px;top:301px;width:1px;height:35px;background:#dddddd"></div>
<div class="a" style="left:1200px;top:301px;width:1px;height:35px;background:#dddddd"></div>
<div class="a" style="left:1328px;top:301px;width:1px;height:35px;background:#dddddd"></div>
<div class="a" style="left:1434px;top:301px;width:1px;height:35px;background:#dddddd"></div>
<div class="a" style="left:1570px;top:301px;width:1px;height:35px;background:#dddddd"></div>
<div class="a" style="left:29px;top:301px;width:1px;height:35px;background:#ddd"></div>
<div class="a" style="left:1570px;top:301px;width:1px;height:35px;background:#ddd"></div>
<div class="a" style="left:1586px;top:0px;width:15px;height:911px;background:#fafafa"></div>
<svg class="a" style="left:1586px;top:0" width="15" height="911" viewBox="0 0 15 911"><path d="M3 11.5 L7.5 5 L12 11.5Z" fill="#808080"/><path d="M3 900 L7.5 906.5 L12 900Z" fill="#808080"/><rect x="3" y="18" width="9" height="356" rx="4.5" fill="#8a8a8a"/></svg>
<svg class="a" style="left:948px;top:636px" width="24" height="30" viewBox="0 0 24 30"><path d="M8.3 15 L8.3 5 Q8.3 3.2 10.15 3.2 Q12 3.2 12 5 L12 9 Q12.5 7.8 13.6 7.8 Q15 7.8 15 9.2 Q15.5 8.6 16.6 8.6 Q17.8 8.6 18 10 Q18.5 9.6 19.5 9.8 Q20.9 10.2 20.9 11.8 L20.9 19 Q20.9 26.5 14 26.5 Q10.5 26.5 8.5 23.5 L3.5 17.6 Q2.3 16 3.6 15.2 Q5 14.5 6.5 15.8 L8.3 17.5 Z" fill="#fff" stroke="#111" stroke-width="1.3" stroke-linejoin="round"/><path d="M12 9 V14 M15 9.2 V14 M18 10 V14" stroke="#111" stroke-width="1"/></svg>
</body></html>
